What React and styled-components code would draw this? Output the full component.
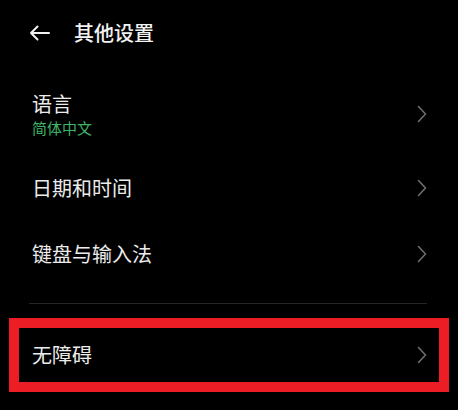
import React from 'react';
import styled, { createGlobalStyle } from 'styled-components';

const GlobalStyle = createGlobalStyle`
  html, body {
    margin: 0;
    padding: 0;
    background: #000;
  }
  body {
    font-family: "Noto Sans CJK SC", "Noto Sans", sans-serif;
    color: #ececec;
  }
`;

const Page = styled.div`
  width: 458px;
  height: 410px;
  overflow: hidden;
  background: #000;
`;

const Header = styled.header`
  height: 66px;
  display: flex;
  align-items: center;
  gap: 24px;
  padding-left: 29px;
`;

const Title = styled.h1`
  margin: 0;
  font-size: 20px;
  font-weight: 500;
  line-height: 26px;
  color: #f2f2f2;
`;

const List = styled.div`
  display: flex;
  flex-direction: column;
  padding-top: 5px;
`;

const Row = styled.div`
  display: flex;
  align-items: center;
  justify-content: space-between;
  padding: ${p => (p.$boxed ? '14px 12px 14px 13px' : p.$sub ? '20px 31px 18px 32px' : '20px 31px 20px 32px')};
`;

const Texts = styled.div`
  display: flex;
  flex-direction: column;
  gap: 2px;
`;

const Label = styled.span`
  font-size: 20px;
  line-height: 26px;
  color: #ececec;
`;

const Sub = styled.span`
  font-size: 15px;
  line-height: 18px;
  color: #3fb468;
`;

const Divider = styled.div`
  height: 1px;
  background: #262626;
  margin: 16px 31px 0 29px;
`;

const Highlight = styled.div`
  margin: 14px 9px 0;
  border: 10px solid #ec1d25;
`;

const BackArrow = () => (
  <svg width="21" height="16" viewBox="0 0 21 16" fill="none">
    <path d="M20 8H2M8.5 1.5L2 8l6.5 6.5" stroke="#f2f2f2" strokeWidth="2" strokeLinecap="round" strokeLinejoin="round" />
  </svg>
);

const Chevron = () => (
  <svg width="10" height="18" viewBox="0 0 10 18" fill="none">
    <path d="M1.5 1.5L8.5 9l-7 7.5" stroke="#6e6e6e" strokeWidth="1.6" strokeLinecap="round" strokeLinejoin="round" />
  </svg>
);

const items = [
  { label: '语言', sub: '简体中文' },
  { label: '日期和时间' },
  { label: '键盘与输入法' },
];

export default function App() {
  return (
    <Page>
      <GlobalStyle />
      <Header>
        <BackArrow />
        <Title>其他设置</Title>
      </Header>
      <List>
        {items.map(item => (
          <Row key={item.label} $sub={!!item.sub}>
            <Texts>
              <Label>{item.label}</Label>
              {item.sub && <Sub>{item.sub}</Sub>}
            </Texts>
            <Chevron />
          </Row>
        ))}
        <Divider />
        <Highlight>
          <Row $boxed>
            <Label>无障碍</Label>
            <Chevron />
          </Row>
        </Highlight>
      </List>
    </Page>
  );
}
